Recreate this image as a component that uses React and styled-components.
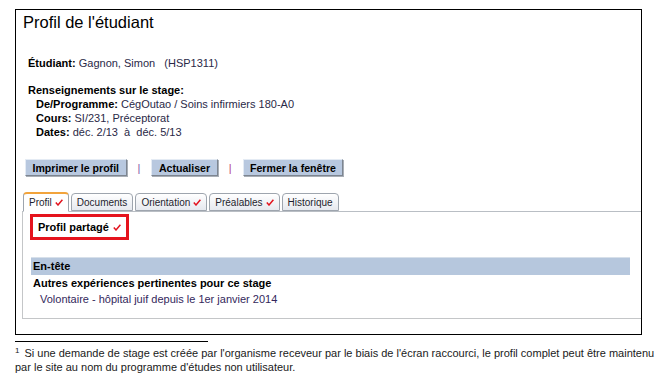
import React from 'react';
import styled, { createGlobalStyle } from 'styled-components';

const GlobalStyle = createGlobalStyle`
  html, body {
    margin: 0;
    padding: 0;
    background: #ffffff;
    font-family: "Liberation Sans", Arial, sans-serif;
  }
`;

const Page = styled.div`
  width: 658px;
  height: 382px;
  overflow: hidden;
`;

const Frame = styled.div`
  margin: 9px 0 0 15px;
  width: 625px;
  border: 1px solid #000;
  padding-bottom: 15px;
`;

const Title = styled.h1`
  margin: 2px 0 0 7px;
  font-size: 16.5px;
  font-weight: normal;
  line-height: 20px;
  color: #000;
`;

const Info = styled.div`
  margin-top: ${(p) => p.top}px;
  padding-left: ${(p) => p.indent}px;
  font-size: 11px;
  line-height: 14px;
  color: #2a2947;
`;

const Label = styled.b`
  color: #000;
`;

const Toolbar = styled.div`
  display: flex;
  align-items: center;
  margin-top: 20px;
  padding-left: 9px;
  gap: 10px;
`;

const Button = styled.button`
  height: 17px;
  padding: 0 6.5px;
  font-family: "Liberation Sans", Arial, sans-serif;
  font-size: 10.6px;
  font-weight: bold;
  color: #000;
  background: #b8c8df;
  border: 1px solid;
  border-color: #e4ebf4 #7d8590 #7d8590 #e4ebf4;
  box-shadow: 1px 1px 0 #a8aeb6;
`;

const Sep = styled.span`
  font-size: 11px;
  color: ${(p) => p.color};
  padding: 0 1px;
`;

const TabRow = styled.div`
  display: flex;
  align-items: flex-end;
  gap: 2px;
  margin: 16px 0 0 6px;
  padding-left: 1px;
  border-bottom: 1px solid #b9bec4;
  height: 19px;
`;

const Tab = styled.div`
  display: flex;
  align-items: center;
  gap: 3px;
  height: ${(p) => (p.active ? '17px' : '16px')};
  padding: 0 5px;
  margin-bottom: ${(p) => (p.active ? '-1px' : '0')};
  font-size: 10px;
  color: #1e1e2e;
  background: ${(p) => (p.active ? '#ffffff' : 'linear-gradient(#ffffff, #e6e9ef)')};
  border: 1px solid #9ea5ae;
  border-top: ${(p) => (p.active ? '2px solid #f2a43c' : '1px solid #9ea5ae')};
  border-bottom: ${(p) => (p.active ? '1px solid #ffffff' : '1px solid #9ea5ae')};
  border-radius: 4px 4px 0 0;
`;

const Panel = styled.div`
  margin-left: 6px;
  height: 104px;
  border-left: 1px solid #c4c6c8;
  border-bottom: 1px solid #c4c6c8;
  padding: 2px 11px 0 7px;
`;

const Shared = styled.div`
  display: flex;
  align-items: center;
  gap: 4px;
  width: fit-content;
  height: 20px;
  padding: 0 5px 0 5px;
  border: 3px solid #e5131d;
  font-size: 11px;
  font-weight: bold;
  color: #000;
`;

const SectionBar = styled.div`
  margin: 17px 0 0 1px;
  height: 17px;
  line-height: 17px;
  padding-left: 2px;
  background: #b6c7dd;
  border-top: 1px solid #d7e0ea;
  font-size: 11px;
  font-weight: bold;
  color: #000;
`;

const FieldTitle = styled.div`
  padding: 1px 0 0 3px;
  font-size: 11px;
  line-height: 15px;
  font-weight: bold;
  color: #000;
`;

const FieldValue = styled.div`
  padding: 1px 0 0 10px;
  font-size: 11px;
  line-height: 15px;
  color: #33285c;
`;

const Rule = styled.div`
  margin: 6px 0 0 15px;
  width: 193px;
  border-top: 1px solid #000;
`;

const Footnote = styled.p`
  margin: 4px 0 0 15px;
  width: 641px;
  font-size: 11px;
  line-height: 14px;
  color: #1a1a1a;

  sup {
    display: inline-block;
    font-size: 8px;
    line-height: 8px;
    vertical-align: 4px;
    margin-right: 5px;
  }
`;

const Check = () => (
  <svg width="8" height="7" viewBox="0 0 8 7">
    <path d="M0.8 3.6 L3 6 L7.4 0.8" fill="none" stroke="#e3141f" strokeWidth="1.5" />
  </svg>
);

const tabs = [
  { label: 'Profil', check: true, active: true },
  { label: 'Documents' },
  { label: 'Orientation', check: true },
  { label: 'Préalables', check: true },
  { label: 'Historique' },
];

export default function App() {
  return (
    <Page>
      <GlobalStyle />
      <Frame>
        <Title>Profil de l'étudiant</Title>
        <Info top={24} indent={12}>
          <Label>Étudiant:</Label> Gagnon, Simon&nbsp;&nbsp;&nbsp;(HSP1311)
        </Info>
        <Info top={13} indent={12}>
          <Label>Renseignements sur le stage:</Label>
        </Info>
        <Info top={0} indent={20}>
          <div><Label>De/Programme:</Label> CégOutao / Soins infirmiers 180-A0</div>
          <div><Label>Cours:</Label> SI/231, Préceptorat</div>
          <div><Label>Dates:</Label> déc. 2/13&nbsp; à&nbsp; déc. 5/13</div>
        </Info>
        <Toolbar>
          <Button>Imprimer le profil</Button>
          <Sep color="#7c5aa6">|</Sep>
          <Button>Actualiser</Button>
          <Sep color="#b4407f">|</Sep>
          <Button>Fermer la fenêtre</Button>
        </Toolbar>
        <TabRow>
          {tabs.map((t) => (
            <Tab key={t.label} active={t.active}>
              {t.label}
              {t.check && <Check />}
            </Tab>
          ))}
        </TabRow>
        <Panel>
          <Shared>
            Profil partagé <Check />
          </Shared>
          <SectionBar>En-tête</SectionBar>
          <FieldTitle>Autres expériences pertinentes pour ce stage</FieldTitle>
          <FieldValue>Volontaire - hôpital juif depuis le 1er janvier 2014</FieldValue>
        </Panel>
      </Frame>
      <Rule />
      <Footnote>
        <sup>1</sup>Si une demande de stage est créée par l'organisme receveur par le biais de l'écran raccourci, le profil complet peut être maintenu par le site au nom du programme d'études non utilisateur.
      </Footnote>
    </Page>
  );
}
